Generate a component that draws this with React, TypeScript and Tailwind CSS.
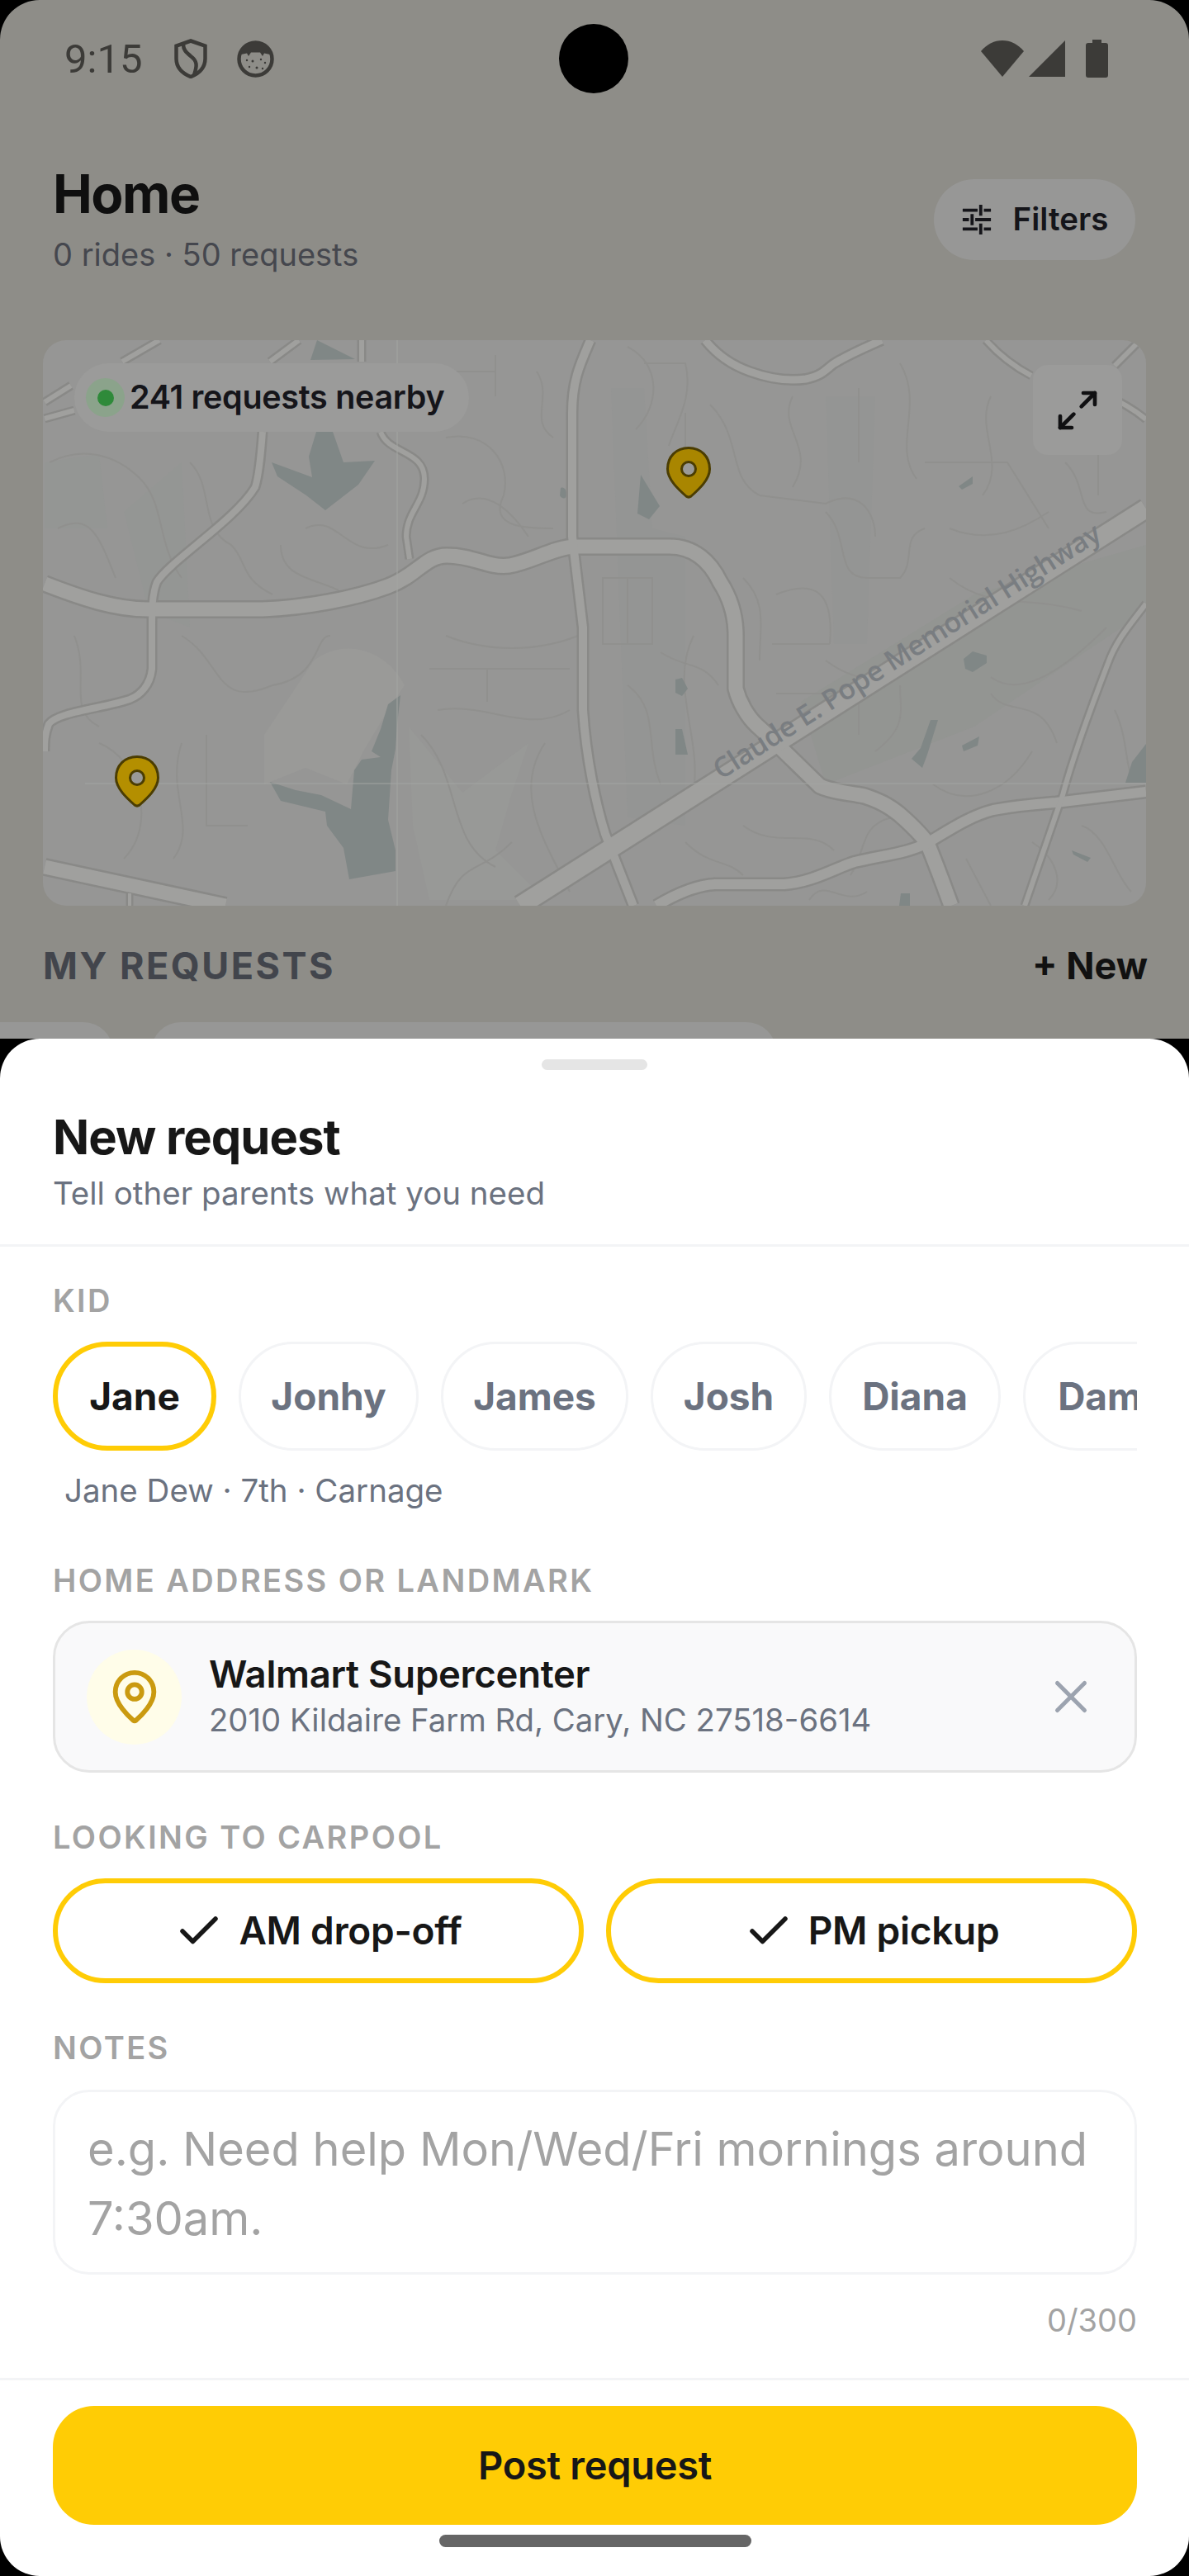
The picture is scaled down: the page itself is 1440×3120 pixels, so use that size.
import { Check, MapPin, Maximize2, X } from "lucide-react"

const kids = [
  { name: "Jane", w: "w-[198px]", active: true },
  { name: "Jonhy", w: "w-[218px]", active: false },
  { name: "James", w: "w-[227px]", active: false },
  { name: "Josh", w: "w-[189px]", active: false },
  { name: "Diana", w: "w-[208px]", active: false },
  { name: "Damian", w: "w-[254px]", active: false },
]

// map art is in page coordinates, so the path numbers read straight off the screenshot
const roads = [
  { w: 17, d: "M54 707C100 725 140 738 179 738H318C370 736 430 725 470 710C505 697 515 673 541 673C575 673 590 688 617 685C645 680 670 663 697 662H811C840 662 860 680 872 705C885 725 891 745 891 770V834C895 850 905 868 917 879C935 895 975 935 993 952C1010 960 1030 960 1047 964C1065 970 1075 975 1089 986C1105 1000 1115 1010 1123 1021C1135 1050 1142 1070 1152 1097" },
  { w: 10, d: "M715 412C703 440 693 460 693 500V650L706 760V860C710 920 722 975 733 1010L767 1097" },
  { w: 8, d: "M318 523C316 550 314 575 309 590C285 630 205 680 190 705C184 720 184 740 184 760V810C182 830 170 842 157 847C125 858 70 862 59 877C54 890 54 900 54 910" },
  { w: 6, d: "M461 523C470 550 514 545 514 580C514 610 492 620 492 650L496 677" },
  { w: 12, d: "M795 1097C820 1082 845 1072 866 1071H950C985 1068 1010 1052 1035 1044C1075 1035 1100 1033 1123 1021C1150 1005 1175 988 1203 981C1230 976 1250 974 1279 972L1388 959" },
  { w: 6, d: "M1388 731C1370 755 1352 775 1342 803C1320 860 1300 915 1287 963L1241 1097" },
  { w: 9, d: "M854 412C870 432 888 443 908 450C930 458 955 462 976 459C995 455 1000 448 1009 441C1030 428 1050 420 1068 412" },
  { w: 6, d: "M1194 412C1210 430 1230 445 1249 455M1340 480C1355 485 1375 497 1388 508M1350 443L1376 417" },
  { w: 17, d: "M54 1050L273 1097" },
  { w: 6, d: "M148 438L193 412M327 438L362 412M438 412V438M54 487L86 467M54 507L90 497" },
  { w: 4, d: "M157 1082V1097" },
  { w: 22, d: "M1388 616L630 1097" },
]

const ponds = [
  "M383 523H403L416 560L454 558L434 587L394 618L371 600L336 577L329 560L378 578L374 553Z",
  "M485 842L481 877L479 907L474 933L470 993L479 1030V1055L423 1065L416 1027L396 1000L394 983L340 970L327 947L358 957L389 963L425 980L429 933L438 920L461 917L450 910L461 883L470 853Z",
  "M776 575L799 613L786 629L772 622Z",
  "M1161 589L1178 577V586L1165 593Z",
  "M1167 798L1178 789L1195 794V803L1178 814L1169 810Z",
  "M818 823L826 821L833 834L826 843L818 839Z",
  "M818 883H826L833 914H818Z",
  "M1127 872H1136L1123 914L1117 930L1104 919L1115 906Z",
  "M1165 903L1186 892L1184 903L1167 910Z",
  "M1388 901V948H1363L1371 923Z",
  "M1091 1082H1102V1097H1089Z",
  "M1298 1030L1321 1039L1317 1044L1300 1035Z",
  "M679 591C684 589 687 595 686 601C684 605 680 604 678 600Z",
  "M430 435L376 436L384 412Z",
]

// residential streets, deliberately faint
const streets = [
  "M60 560C100 540 140 550 170 580C200 610 190 660 220 700M70 640C110 620 120 650 140 700",
  "M230 560C260 590 240 640 280 660C300 680 290 700 330 720",
  "M370 640C410 620 420 680 470 660M340 660C340 700 380 700 410 715",
  "M540 530C590 520 620 560 610 600C590 640 640 640 670 640M560 610C590 590 620 620 640 650",
  "M600 430V480M650 450C670 480 640 510 670 530M530 450H600",
  "M760 420C800 440 800 490 770 520M780 440H830C840 480 820 510 810 540M830 500V560",
  "M860 490C900 530 880 580 920 600L1000 610C1040 590 1060 620 1060 650",
  "M960 480C940 520 990 540 960 590M1040 470V560M1090 440C1120 490 1080 540 1110 580",
  "M1000 620C1030 650 1010 700 1050 700H1090C1110 680 1090 650 1120 640",
  "M1120 560H1220L1270 640M1150 640C1200 660 1240 640 1270 620M1200 480C1180 520 1220 560 1190 600",
  "M1290 560C1320 590 1300 630 1340 620M1330 540V600",
  "M730 700H790V780H730ZM760 700V780M800 790C830 810 850 800 870 830",
  "M940 720C990 700 1010 720 1005 780M935 780H1005M940 840H1040V890",
  "M900 700C930 730 920 760 920 800M1000 800C1040 830 1080 830 1120 790",
  "M760 830C800 860 780 900 800 950M840 770C810 830 850 890 840 960",
  "M220 770C270 800 260 860 330 830C390 820 380 770 400 770M90 770C110 820 80 860 120 880",
  "M540 770C590 790 650 790 700 770M520 810H690M530 860C590 850 640 890 690 860M590 810V850",
  "M120 900C170 920 190 1000 150 1040M220 900C200 960 240 1000 210 1040M250 890V1000H300",
  "M510 890C560 940 540 1020 600 1050M660 900C620 960 660 1020 690 1080",
  "M1150 700C1200 740 1240 720 1310 740M1200 820C1240 850 1300 800 1340 760M1200 840C1220 870 1260 840 1280 900",
  "M980 1090C1000 1060 1020 1100 1050 1080M1170 1040L1200 1097M1030 1060C1050 1030 1040 1000 1080 990",
  "M1130 950C1170 980 1220 960 1250 910M1060 910C1100 880 1090 860 1090 830M1250 1020C1280 1040 1290 1070 1270 1090",
  "M1310 1000C1340 1010 1350 1060 1370 1080M1350 860C1370 900 1360 950 1380 940",
  "M900 1000C940 1030 980 1000 1010 1030M830 1020C860 1050 880 1040 900 1060M620 1020C580 1060 560 1040 540 1097",
]

function MapArt() {
  return (
    <svg viewBox="52 412 1336 685" className="block h-full w-full">
      <path d="M54 560L120 550L130 640L54 640ZM150 620L220 560L230 760L180 740Z" fill="#949694" />
      <path d="M970 850L1180 720L1388 660V740L1180 880L1000 950Z" fill="#939592" />
      <path d="M740 470L780 470L790 640L830 650L830 1000L760 990Z M1000 480L1060 480L1050 780L1010 780Z" fill="#949594" />
      <path d="M380 800C420 770 470 790 490 830L470 860L440 910L420 950L370 930L320 950L320 890Z" fill="#9a9a98" />
      <path d="M495 880L560 960L640 900L620 960L600 1030L660 1090H520L500 1000Z" fill="#989997" />
      <g fill="none" stroke="#90908e" strokeWidth="2">
        {streets.map((d) => (
          <path key={d} d={d} />
        ))}
      </g>
      {ponds.map((d) => (
        <path key={d} d={d} fill="#808786" />
      ))}
      <g fill="none" stroke="#898987" strokeLinejoin="round">
        {roads.map((r) => (
          <path key={r.d} d={r.d} strokeWidth={r.w + 5} />
        ))}
      </g>
      <g fill="none" stroke="#a0a09e" strokeLinejoin="round">
        {roads.map((r) => (
          <path key={r.d} d={r.d} strokeWidth={r.w} />
        ))}
      </g>
      {/* tile seams of the map image */}
      <path d="M481 412V1097M103 949H1388" stroke="#a3a5a2" strokeWidth="1" />
      <text
        x="873"
        y="945"
        transform="rotate(-32.3 873 945)"
        fill="#797d81"
        fontSize="34"
        textLength="548"
        className="font-['Open_Sans',sans-serif] font-semibold"
      >
        Claude E. Pope Memorial Highway
      </text>
      <Pin x={834} y={541} fill="#a98600" />
      <Pin x={166} y={915} fill="#b48f00" />
    </svg>
  )
}

function Pin({ x, y, fill }: { x: number; y: number; fill: string }) {
  return (
    <g transform={`translate(${x - 27} ${y})`}>
      <path
        d="M27 1.500C12 1.500 1.500 12 1.500 27C1.500 40 15 52 24 60C26 61.500 28 61.500 30 60C39 52 52.500 40 52.500 27C52.500 12 42 1.500 27 1.500Z"
        fill={fill}
        stroke="#4b3d02"
        strokeWidth="3"
      />
      <circle cx="27" cy="27" r="8.500" fill="#9a9a98" stroke="#4b3d02" strokeWidth="3" />
    </g>
  )
}

function TuneIcon() {
  return (
    <svg width="38" height="38" viewBox="0 0 40 40" stroke="#15151a" strokeWidth="4" fill="none">
      <path d="M2 8H21M29 8H38M25 1V15" />
      <path d="M2 20H10M18 20H38M14 13V27" />
      <path d="M2 32H21M29 32H38M25 25V39" />
    </svg>
  )
}

function StatusBar() {
  return (
    <div className="flex h-[142px] items-center pl-[78px] pr-[98px] text-[#3c3b38]">
      <span className="text-[49px] leading-none font-['Roboto',sans-serif]">9:15</span>
      <svg width="40" height="48" viewBox="0 0 40 48" className="ml-[39px]" fill="none" stroke="#3c3b38" strokeWidth="4.500">
        <path d="M20 2.500L37.500 8.500V24C37.500 35 30 42 20 46C10 42 2.500 35 2.500 24V8.500Z" />
        <path d="M11 7C11 13 14 16 20 21C28 27 28 32 24 44" />
      </svg>
      <svg width="45" height="45" viewBox="0 0 45 45" className="ml-[36px]">
        <circle cx="22.500" cy="22.500" r="20" fill="none" stroke="#3c3b38" strokeWidth="4.500" />
        <path d="M5 17C7 6 15 2 22.500 2C30 2 38 6 40 17L33 15.500L31 19L28 14.500H17L14 19L12 15.500Z" fill="#3c3b38" />
        <g fill="#3c3b38">
          <circle cx="12" cy="24" r="1.200" />
          <circle cx="19" cy="25" r="1.500" />
          <circle cx="29" cy="23" r="1.200" />
          <circle cx="34" cy="27" r="1.200" />
          <circle cx="15" cy="32" r="1.200" />
          <circle cx="24" cy="33" r="1.500" />
          <circle cx="31" cy="34" r="1.200" />
        </g>
      </svg>
      <div className="ml-[345px] h-[84px] w-[84px] shrink-0 rounded-full bg-black" />
      <div className="ml-auto flex items-center gap-[6px]">
        <svg width="52" height="44" viewBox="0 0 52 44" fill="#3c3b38">
          <path d="M26 44L0 13C8 4 16 0 26 0C36 0 44 4 52 13Z" />
        </svg>
        <svg width="44" height="44" viewBox="0 0 44 44" fill="#3c3b38">
          <path d="M44 0V44H0Z" />
        </svg>
        <svg width="27" height="46" viewBox="0 0 27 46" fill="#3c3b38" className="ml-[19px]">
          <path d="M8 0H19V4H24C26 4 27 5 27 7V43C27 45 26 46 24 46H3C1 46 0 45 0 43V7C0 5 1 4 3 4H8Z" />
        </svg>
      </div>
    </div>
  )
}

function Home() {
  return (
    <div className="h-[1258px] overflow-hidden rounded-t-[48px] bg-[#8e8d88] font-['Inter',sans-serif]">
      <StatusBar />
      <div className="flex items-start justify-between pl-[64px] pr-[65px] pt-[57px]">
        <div>
          <div className="text-[64px] leading-[72px] font-bold tracking-[-1.5px] text-[#0f0f0f]">Home</div>
          <div className="mt-[14px] text-[38px] leading-[46px] text-[#45474e]">0 rides · 50 requests</div>
        </div>
        <div className="mt-[18px] flex h-[98px] w-[244px] items-center justify-center gap-[25px] rounded-full bg-[#979796]">
          <TuneIcon />
          <span className="text-[38.500px] font-semibold text-[#15151a]">Filters</span>
        </div>
      </div>
      <div className="relative mx-[52px] mt-[81px] h-[685px] w-[1336px] overflow-hidden rounded-[28px] bg-[#969695]">
        <MapArt />
        <div className="absolute left-[38px] top-[28px] flex h-[83px] w-[478px] items-center rounded-[42px] bg-[#9b9b9a] pl-[14px]">
          <div className="flex h-[47px] w-[47px] items-center justify-center rounded-full bg-[#8ba38b]">
            <div className="h-[20px] w-[20px] rounded-full bg-[#2f8a3a]" />
          </div>
          <span className="ml-[6px] text-[39.500px] font-semibold tracking-[-0.3px] text-[#15151a]">241 requests nearby</span>
        </div>
        <div className="absolute right-[29px] top-[30px] flex h-[109px] w-[108px] items-center justify-center rounded-[18px] bg-[#9b9b9a]">
          <Maximize2 size={56} strokeWidth={2} color="#101012" />
        </div>
      </div>
      <div className="flex items-center justify-between pl-[52px] pr-[50px] pt-[45px]">
        <span className="text-[45px] leading-[56px] font-bold tracking-[2.500px] text-[#42454c]">MY REQUESTS</span>
        <span className="text-[45px] leading-[56px] font-bold text-[#111]">+ New</span>
      </div>
      <div className="mt-[40px] flex gap-[46px]">
        <div className="h-[60px] w-[137px] rounded-tr-[36px] bg-[#979796]" />
        <div className="h-[60px] w-[757px] rounded-t-[36px] bg-[#979796]" />
      </div>
    </div>
  )
}

function FieldLabel({ children }: { children: string }) {
  return <div className="text-[38px] leading-[44px] font-semibold tracking-[2.400px] text-[#a3a3a3]">{children}</div>
}

function Sheet() {
  return (
    <div className="h-[1862px] overflow-hidden rounded-[48px] bg-white font-['Inter',sans-serif]">
      <div className="flex justify-center pt-[25px]">
        <div className="h-[13px] w-[128px] rounded-full bg-[#e5e5e5]" />
      </div>
      <div className="border-b-[3px] border-[#f3f4f6] px-[64px] pb-[34px] pt-[45px]">
        <div className="text-[58px] leading-[72px] font-bold tracking-[-1px] text-[#171717]">New request</div>
        <div className="mt-[4px] text-[38.500px] leading-[56px] text-[#6b7280]">Tell other parents what you need</div>
      </div>
      <div className="pl-[64px] pr-[63px] pt-[43px]">
        <FieldLabel>KID</FieldLabel>
        <div className="mt-[28px] flex gap-[27px] overflow-hidden">
          {kids.map((k) => (
            <div
              key={k.name}
              className={
                k.active
                  ? `flex h-[132px] shrink-0 items-center justify-center rounded-full border-[6px] border-[#ffcc05] text-[46px] font-bold text-[#171717] ${k.w}`
                  : `flex h-[132px] shrink-0 items-center justify-center rounded-full border-[3px] border-[#f3f4f6] text-[46px] font-bold text-[#6b7280] ${k.w}`
              }
            >
              {k.name}
            </div>
          ))}
        </div>
        <div className="mt-[24px] pl-[14px] text-[38.500px] leading-[48px] text-[#6b7280]">Jane Dew · 7th · Carnage</div>
        <div className="mt-[63px]">
          <FieldLabel>HOME ADDRESS OR LANDMARK</FieldLabel>
        </div>
        <div className="mt-[27px] flex h-[184px] items-center rounded-[44px] border-[3px] border-[#e5e5e5] bg-[#f9f9fa] pl-[38px] pr-[44px]">
          <div className="flex h-[115px] w-[115px] shrink-0 items-center justify-center rounded-full bg-[#fffde9]">
            <MapPin size={70} strokeWidth={2} color="#ca9a10" />
          </div>
          <div className="ml-[33px]">
            <div className="text-[45.500px] leading-[56px] font-semibold tracking-[-0.3px] text-[#171717]">Walmart Supercenter</div>
            <div className="text-[38.300px] leading-[54px] text-[#6b7280]">2010 Kildaire Farm Rd, Cary, NC 27518-6614</div>
          </div>
          <X className="ml-auto" size={66} strokeWidth={1.8} color="#9ca3af" />
        </div>
        <div className="mt-[56px]">
          <FieldLabel>LOOKING TO CARPOOL</FieldLabel>
        </div>
        <div className="mt-[28px] grid grid-cols-2 gap-[27px]">
          {["AM drop-off", "PM pickup"].map((t) => (
            <div
              key={t}
              className="flex h-[127px] items-center justify-center gap-[18px] rounded-full border-[6px] border-[#ffcc05] text-[46px] font-semibold tracking-[-0.3px] text-[#171717]"
            >
              <Check size={60} strokeWidth={2.2} color="#171717" />
              {t}
            </div>
          ))}
        </div>
        <div className="mt-[56px]">
          <FieldLabel>NOTES</FieldLabel>
        </div>
        <div className="mt-[29px] h-[224px] rounded-[44px] border-[3px] border-[#f3f4f6] pl-[39px] pr-[20px] pt-[27px] text-[56px] leading-[84px] text-[#a3a3a3]">
          e.g. Need help Mon/Wed/Fri mornings around 7:30am.
        </div>
        <div className="mt-[33px] text-right text-[38px] leading-[44px] text-[#a3a3a3]">0/300</div>
      </div>
      <div className="mt-[48px] border-t-[3px] border-[#f3f4f6] pl-[64px] pr-[63px] pt-[31px]">
        <div className="flex h-[144px] items-center justify-center rounded-[50px] bg-[#ffcc05] text-[47px] font-semibold tracking-[-0.3px] text-[#171717]">
          Post request
        </div>
        <div className="mx-auto mt-[12px] h-[15px] w-[378px] rounded-full bg-[#666]" />
      </div>
    </div>
  )
}

export default function App() {
  return (
    <div className="h-[3120px] w-[1440px] overflow-hidden bg-black">
      <Home />
      <Sheet />
    </div>
  )
}
